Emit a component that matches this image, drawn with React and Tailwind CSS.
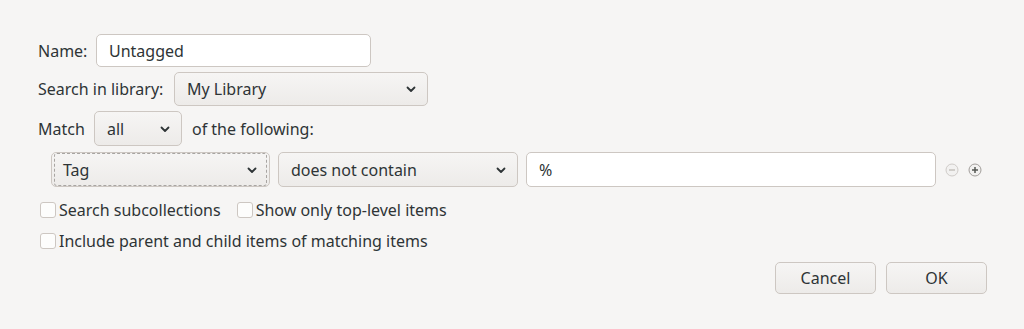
import React from 'react';

function Chevron() {
  return (
    <svg width="12" height="12" viewBox="0 0 12 12" className="shrink-0">
      <path d="M2.5 4.5 L6 8 L9.5 4.5" fill="none" stroke="#2e3436" strokeWidth="1.8" strokeLinecap="round" strokeLinejoin="round" />
    </svg>
  );
}

function Select({ label, className, focused }) {
  return (
    <div
      className={
        'flex items-center rounded-[5px] border border-[#cdc7c2] bg-gradient-to-b from-[#f6f5f4] to-[#edebe9] ' +
        className
      }
    >
      <div
        className={
          'flex h-full w-full items-center justify-between rounded-[3px] ' +
          (focused
            ? 'm-[2px] border border-dashed border-[#a8a5a2] pl-[8px] pr-[8px]'
            : 'pl-[12px] pr-[10px]')
        }
      >
        <span>{label}</span>
        <Chevron />
      </div>
    </div>
  );
}

function Checkbox({ label }) {
  return (
    <label className="flex items-center">
      <span className="ml-[2px] mr-[3px] h-[16px] w-[16px] rounded-[3px] border border-[#cdc7c2] bg-[#fdfdfc]" />
      <span>{label}</span>
    </label>
  );
}

function RoundIcon({ sign, dim }) {
  return (
    <svg width="14" height="14" viewBox="0 0 14 14">
      <circle cx="7" cy="7" r="6" fill="#f2f1f0" stroke={dim ? '#cfcbc8' : '#a29e9b'} strokeWidth="1" />
      <path d="M4 7 H10" stroke={dim ? '#c4c0bd' : '#555753'} strokeWidth="1.5" />
      {sign === '+' && <path d="M7 4 V10" stroke="#555753" strokeWidth="1.5" />}
    </svg>
  );
}

export default function App() {
  return (
    <div
      className="h-[329px] w-[1024px] bg-[#f6f5f4] pl-[38px] pr-[37px] pt-[34px] text-[16px] text-[#2e3436]"
      style={{ fontFamily: '"Noto Sans", "DejaVu Sans", sans-serif' }}
    >
      {/* Name */}
      <div className="flex h-[33px] items-center">
        <span className="w-[58px]">Name:</span>
        <div className="flex h-[33px] w-[275px] items-center rounded-[5px] border border-[#cdc7c2] bg-white px-[12px]">
          Untagged
        </div>
      </div>

      {/* Library */}
      <div className="mt-[5px] flex h-[34px] items-center">
        <span className="w-[136px]">Search in library:</span>
        <Select label="My Library" className="h-[34px] w-[254px]" />
      </div>

      {/* Match */}
      <div className="mt-[5px] flex h-[35px] items-center">
        <span className="w-[56px]">Match</span>
        <Select label="all" className="h-[35px] w-[88px]" />
        <span className="ml-[10px]">of the following:</span>
      </div>

      {/* Condition row */}
      <div className="ml-[13px] mt-[6px] flex h-[35px] items-center">
        <Select label="Tag" focused className="h-[35px] w-[219px]" />
        <Select label="does not contain" className="ml-[8px] h-[35px] w-[240px]" />
        <div className="ml-[8px] flex h-[35px] w-[410px] items-center rounded-[5px] border border-[#cdc7c2] bg-white px-[12px]">
          %
        </div>
        <div className="ml-[9px] flex items-center gap-[9px]">
          <RoundIcon sign="-" dim />
          <RoundIcon sign="+" />
        </div>
      </div>

      {/* Options */}
      <div className="mt-[13px] flex h-[20px] items-center gap-[14px]">
        <Checkbox label="Search subcollections" />
        <Checkbox label="Show only top-level items" />
      </div>
      <div className="mt-[11px] flex h-[20px] items-center">
        <Checkbox label="Include parent and child items of matching items" />
      </div>

      {/* Buttons */}
      <div className="mt-[11px] flex justify-end gap-[10px]">
        <button className="h-[32px] w-[101px] rounded-[5px] border border-[#cdc7c2] bg-gradient-to-b from-[#f6f5f4] to-[#edebe9]">
          Cancel
        </button>
        <button className="h-[32px] w-[101px] rounded-[5px] border border-[#cdc7c2] bg-gradient-to-b from-[#f6f5f4] to-[#edebe9]">
          OK
        </button>
      </div>
    </div>
  );
}
